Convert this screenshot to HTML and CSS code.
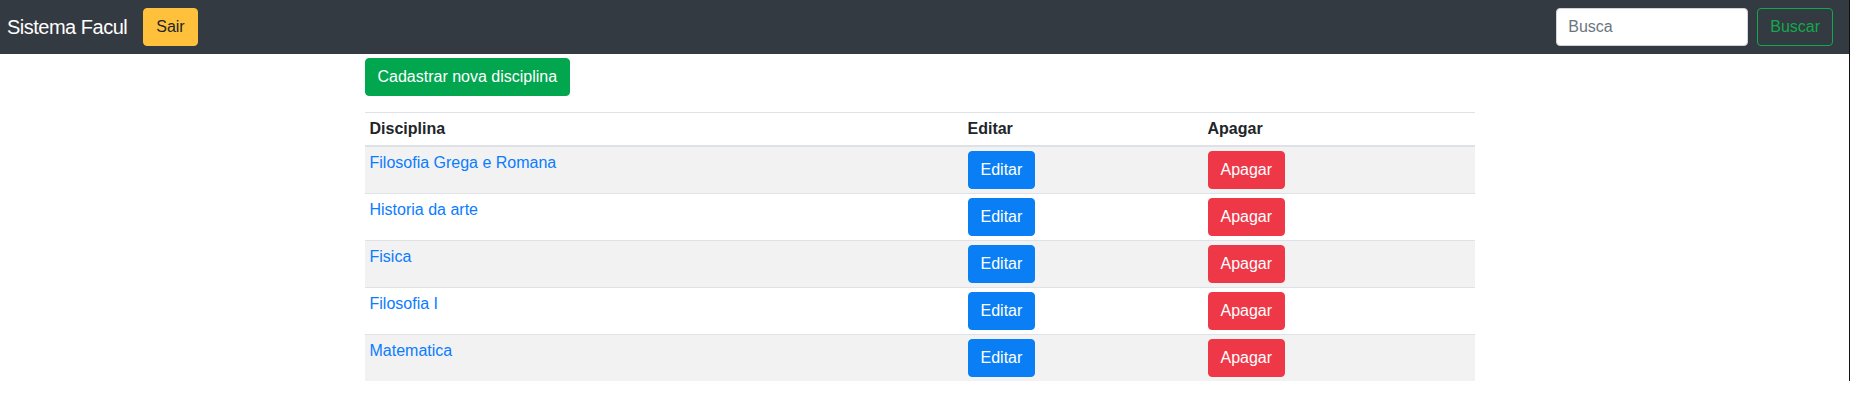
FILE: index.html
```html
<!DOCTYPE html>
<html lang="pt">
<head>
<meta charset="utf-8">
<title>Sistema Facul</title>
<link rel="stylesheet" href="styles.css">
</head>
<body>
<nav class="navbar">
  <div class="nav-left">
    <span class="brand">Sistema Facul</span>
    <button class="btn btn-warning">Sair</button>
  </div>
  <form class="search">
    <input class="search-input" type="text" placeholder="Busca">
    <button class="btn btn-outline-success" type="button">Buscar</button>
  </form>
</nav>
<main class="main">
  <div class="container">
    <button class="btn btn-success">Cadastrar nova disciplina</button>
    <table class="table">
      <colgroup>
        <col class="col-name">
        <col class="col-edit">
        <col class="col-del">
      </colgroup>
      <thead>
        <tr><th>Disciplina</th><th>Editar</th><th>Apagar</th></tr>
      </thead>
      <tbody>
        <tr><td><a href="#">Filosofia Grega e Romana</a></td><td><button class="btn btn-cell btn-primary">Editar</button></td><td><button class="btn btn-cell btn-danger">Apagar</button></td></tr>
        <tr><td><a href="#">Historia da arte</a></td><td><button class="btn btn-cell btn-primary">Editar</button></td><td><button class="btn btn-cell btn-danger">Apagar</button></td></tr>
        <tr><td><a href="#">Fisica</a></td><td><button class="btn btn-cell btn-primary">Editar</button></td><td><button class="btn btn-cell btn-danger">Apagar</button></td></tr>
        <tr><td><a href="#">Filosofia I</a></td><td><button class="btn btn-cell btn-primary">Editar</button></td><td><button class="btn btn-cell btn-danger">Apagar</button></td></tr>
        <tr><td><a href="#">Matematica</a></td><td><button class="btn btn-cell btn-primary">Editar</button></td><td><button class="btn btn-cell btn-danger">Apagar</button></td></tr>
      </tbody>
    </table>
  </div>
</main>
</body>
</html>
```
FILE: styles.css
```css
html {
  border-right: 1px solid #111;
  background: #fff;
}
body {
  margin: 0;
  font-family: "Liberation Sans", Arial, sans-serif;
  font-size: 16px;
  line-height: 1.5;
  color: #212529;
}
.navbar {
  height: 54px;
  box-sizing: border-box;
  background: #343a41;
  display: flex;
  align-items: center;
  justify-content: space-between;
  padding: 0 16px 0 7px;
}
.nav-left {
  display: flex;
  align-items: center;
}
.brand {
  color: #fff;
  font-size: 20px;
  line-height: 30px;
  margin-right: 16px;
  letter-spacing: -0.5px;
}
.btn {
  font-family: inherit;
  font-size: 16px;
  line-height: 24px;
  height: 38px;
  box-sizing: border-box;
  padding: 6px 12px;
  border: 1px solid transparent;
  border-radius: 4px;
  cursor: pointer;
}
.btn-warning {
  background: #ffc13b;
  border-color: #ffc13b;
  color: #212529;
}
.search {
  display: flex;
  align-items: center;
  margin: 0;
}
.search-input {
  width: 192px;
  height: 38px;
  box-sizing: border-box;
  padding: 6px 11px;
  font-family: inherit;
  font-size: 16px;
  border: 1px solid #ced4da;
  border-radius: 4px;
  margin-right: 9px;
  background: #fff;
}
.search-input::placeholder {
  color: #6c757d;
}
.btn-outline-success {
  background: transparent;
  border-color: #12a84c;
  color: #12a84c;
}
.main {
  padding-right: 10px;
}
.container {
  max-width: 1110px;
  margin: 0 auto;
  padding: 4px 15px 0;
}
.btn-success {
  background: #01a64f;
  border-color: #01a64f;
  color: #fff;
  display: block;
  margin-bottom: 16px;
}
.table {
  width: 100%;
  table-layout: fixed;
  border-collapse: collapse;
  color: #212529;
}
.col-name { width: 598px; }
.col-edit { width: 240px; }
.col-del { width: 272px; }
.table th,
.table td {
  padding: 4px 5px;
  text-align: left;
  vertical-align: top;
  border-top: 1px solid #dee2e6;
}
.table th {
  font-weight: bold;
  border-bottom: 2px solid #dee2e6;
}
.table tbody tr:nth-child(odd) {
  background: #f2f2f2;
}
.table a {
  color: #0a7cff;
  text-decoration: none;
}
.btn-cell {
  display: block;
}
.btn-primary {
  background: #0a7ff5;
  border-color: #0a7ff5;
  color: #fff;
}
.btn-danger {
  background: #ee3848;
  border-color: #ee3848;
  color: #fff;
}
```
